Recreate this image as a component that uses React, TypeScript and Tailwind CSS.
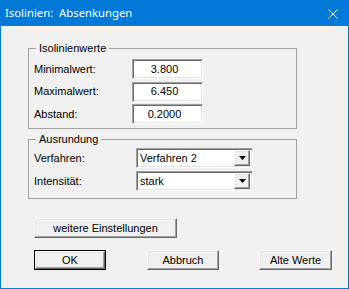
export default function App() {
  const sunken =
    "border border-t-[#a0a0a0] border-l-[#a0a0a0] border-b-white border-r-white shadow-[inset_1px_1px_0_#696969,inset_-1px_-1px_0_#e3e3e3] bg-white";
  const raised =
    "border border-t-white border-l-white border-b-[#696969] border-r-[#696969] shadow-[inset_-1px_-1px_0_#a0a0a0,inset_1px_1px_0_#e3e3e3] bg-[#f0f0f0]";

  const values = [
    { label: "Minimalwert:", value: "3.800" },
    { label: "Maximalwert:", value: "6.450" },
    { label: "Abstand:", value: "0.2000" },
  ];
  const combos = [
    { label: "Verfahren:", value: "Verfahren 2" },
    { label: "Intensität:", value: "stark" },
  ];

  return (
    <div className="flex h-[289px] w-[349px] flex-col border border-t-0 border-[#0078d7] bg-[#f0f0f0] font-['Liberation_Sans',Arial,sans-serif] text-[11px] text-black">
      <div className="flex h-[26px] shrink-0 items-center justify-between bg-[#0078d7] pl-[4px] pr-[10px] font-['Noto_Sans',sans-serif] text-[11.3px] text-white">
        <span>Isolinien:&nbsp; Absenkungen</span>
        <svg width="10" height="10" viewBox="0 0 10 10" className="mt-[1px]">
          <path d="M0.5 0.5 L9.5 9.5 M9.5 0.5 L0.5 9.5" stroke="white" strokeWidth="1" />
        </svg>
      </div>

      <fieldset className="ml-[27px] mt-[16px] w-[269px] border border-[#a0a0a0] pb-[4px] pl-[5px] pt-[4px]">
        <legend className="ml-[2px] px-[3px] leading-[13px]">Isolinienwerte</legend>
        <div className="flex flex-col gap-[2.5px]">
          {values.map((v) => (
            <div key={v.label} className="flex h-[20px] items-center">
              <span className="w-[98px]">{v.label}</span>
              <div className={`flex h-[20px] w-[71px] items-center justify-center pr-[6px] ${sunken}`}>
                {v.value}
              </div>
            </div>
          ))}
        </div>
      </fieldset>

      <fieldset className="ml-[27px] mt-[4px] w-[269px] border border-[#a0a0a0] pb-[7px] pl-[5px] pt-[2px]">
        <legend className="ml-[2px] px-[3px] leading-[13px]">Ausrundung</legend>
        <div className="flex flex-col gap-[3px]">
          {combos.map((c) => (
            <div key={c.label} className="flex h-[20px] items-center">
              <span className="w-[102px]">{c.label}</span>
              <div className={`flex h-[20px] w-[117px] items-center justify-between p-[2px] ${sunken}`}>
                <span className="pl-[1px]">{c.value}</span>
                <div className={`flex h-[16px] w-[16px] items-center justify-center ${raised}`}>
                  <svg width="7" height="4" viewBox="0 0 7 4">
                    <path d="M0 0 H7 L3.5 4 Z" fill="black" />
                  </svg>
                </div>
              </div>
            </div>
          ))}
        </div>
      </fieldset>

      <button className={`ml-[33px] mt-[19px] h-[20px] w-[143px] ${raised}`}>
        weitere Einstellungen
      </button>

      <div className="ml-[33px] mt-[12px] flex">
        <div className="h-[20px] w-[72px] border border-black">
          <button className={`h-full w-full ${raised}`}>OK</button>
        </div>
        <button className={`ml-[41px] h-[20px] w-[72px] ${raised}`}>Abbruch</button>
        <button className={`ml-[40px] h-[20px] w-[73px] ${raised}`}>Alte Werte</button>
      </div>
    </div>
  );
}
